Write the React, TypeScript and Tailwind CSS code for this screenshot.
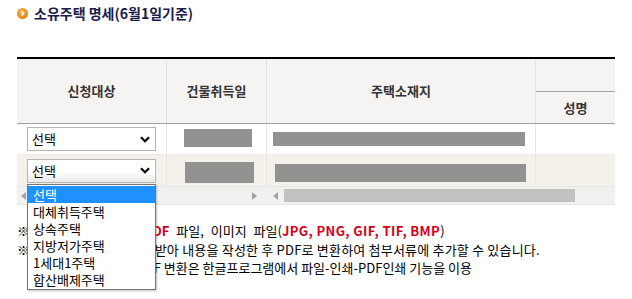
import React from "react";

function Chevron() {
  return (
    <svg width="10" height="7" viewBox="0 0 10 7" className="block">
      <polyline points="1,1.3 5,5.3 9,1.3" fill="none" stroke="#000" strokeWidth="2.2" />
    </svg>
  );
}

function FakeSelect({ open }: { open?: boolean }) {
  return (
    <div
      className={
        "flex h-[24px] w-[129px] items-center justify-between border border-[#b4b4b4] pl-[4px] pr-[5px] text-[13px] text-black " +
        (open ? "bg-gradient-to-b from-white via-white to-[#e9e9e9]" : "bg-white")
      }
    >
      <span className="leading-[22px]">선택</span>
      <Chevron />
    </div>
  );
}

function Arrow({ dir }: { dir: "l" | "r" }) {
  return (
    <svg width="5" height="8" viewBox="0 0 5 8" className="block">
      {dir === "l" ? <polygon points="5,0 0,4 5,8" fill="#a3a3a3" /> : <polygon points="0,0 5,4 0,8" fill="#a3a3a3" />}
    </svg>
  );
}

export default function App() {
  const options = ["선택", "대체취득주택", "상속주택", "지방저가주택", "1세대1주택", "합산배제주택"];
  return (
    <div className="relative h-[299px] w-[632px] overflow-hidden bg-white font-['Noto_Sans_CJK_KR','Noto_Sans',sans-serif] text-black">
      {/* title */}
      <div className="flex h-[26px] items-center pl-[17px]">
        <svg width="11" height="11" viewBox="0 0 11 11" className="block">
          <defs>
            <radialGradient id="og" cx="40%" cy="35%" r="70%">
              <stop offset="0%" stopColor="#fbb24c" />
              <stop offset="100%" stopColor="#e37c12" />
            </radialGradient>
          </defs>
          <circle cx="5.5" cy="5.5" r="5.5" fill="url(#og)" />
          <polyline points="4.3,3.2 6.6,5.5 4.3,7.8" fill="none" stroke="#fff" strokeWidth="1.7" />
        </svg>
        <span className="ml-[6px] text-[14px] font-bold leading-[26px] text-[#1b1b4d]">소유주택 명세(6월1일기준)</span>
      </div>

      {/* table */}
      <div className="ml-[17px] mt-[31px] w-[598px] overflow-hidden border-t-2 border-black">
        {/* header */}
        <div className="flex h-[65px] border-b border-[#a2a2a2] bg-[#f5f4f2] text-[13px] font-bold text-[#333]">
          <div className="flex w-[150px] items-center justify-center border-r border-[#e2e2e2]">신청대상</div>
          <div className="flex w-[100px] items-center justify-center border-r border-[#e2e2e2]">건물취득일</div>
          <div className="flex w-[269px] items-center justify-center border-r border-[#e2e2e2]">주택소재지</div>
          <div className="flex flex-1 flex-col">
            <div className="h-[33px] border-b border-[#a2a2a2]"></div>
            <div className="flex flex-1 items-center justify-center">성명</div>
          </div>
        </div>
        {/* row 1 */}
        <div className="flex h-[31px] border-b border-[#ebebeb] bg-white">
          <div className="flex w-[150px] items-center border-r border-[#e6e6e6] pl-[10px]">
            <FakeSelect />
          </div>
          <div className="flex w-[100px] items-center border-r border-[#e6e6e6] pl-[17px]">
            <div className="mt-[-2px] h-[18px] w-[68px] bg-[#929292]"></div>
          </div>
          <div className="flex w-[269px] items-center border-r border-[#e6e6e6] pl-[6px]">
            <div className="h-[14px] w-[252px] bg-[#929292]"></div>
          </div>
          <div className="flex-1"></div>
        </div>
        {/* row 2 */}
        <div className="flex h-[32px] border-b border-[#e6e6e6] bg-[#f4f0ea]">
          <div className="flex w-[150px] items-center border-r border-[#e6e6e6] pl-[10px]">
            <FakeSelect open />
          </div>
          <div className="flex w-[100px] items-end border-r border-[#e6e6e6] pb-[3px] pl-[18px]">
            <div className="h-[21px] w-[69px] bg-[#929292]"></div>
          </div>
          <div className="flex w-[269px] items-end border-r border-[#e6e6e6] pb-[4px] pl-[8px]">
            <div className="h-[18px] w-[251px] bg-[#929292]"></div>
          </div>
          <div className="flex-1"></div>
        </div>
        {/* scrollbars */}
        <div className="flex h-[18px] border-b border-[#e4e4e4] bg-[#f1f1f1]">
          <div className="flex w-[250px] items-center justify-between pl-[4px] pr-[10px]">
            <Arrow dir="l" />
            <Arrow dir="r" />
          </div>
          <div className="flex flex-1 items-center pl-[6px]">
            <Arrow dir="l" />
            <div className="ml-[6px] h-[13px] w-[291px] bg-[#c1c1c1]"></div>
          </div>
        </div>
      </div>

      {/* notes */}
      <div className="ml-[17px] mt-[17px] text-[13px] leading-[18.5px] text-black">
        <div>
          ※ 첨부 가능 파일형식 : <b className="text-[#d6001c]">PDF</b>
          <span className="[word-spacing:4px]"> 파일, 이미지 파일(</span>
          <b className="tracking-[0.4px] text-[#d6001c]">JPG, PNG, GIF, TIF, BMP</b>)
        </div>
        <div>
          <span className="[word-spacing:0.5px]">※ 관련 서식 파일을 다운 </span>
          <span className="tracking-[0.2px]">받아 내용을 작성한 후 PDF로 변환하여 첨부서류에 추가할 수 있습니다.</span>
        </div>
        <div className="pl-[16px]">한글(HWP) 문서의 PDF 변환은 한글프로그램에서 파일-인쇄-PDF인쇄 기능을 이용</div>
      </div>

      {/* open dropdown list */}
      <div className="absolute left-[27px] top-[184px] w-[129px] border border-[#767676] bg-white py-[1px] shadow-[1px_1px_2px_rgba(0,0,0,0.25)]">
        {options.map((o, i) => (
          <div
            key={o}
            className={
              "h-[17px] pl-[5px] text-[13px] leading-[17px] " + (i === 0 ? "bg-[#1e90ff] text-white" : "text-black")
            }
          >
            {o}
          </div>
        ))}
      </div>
    </div>
  );
}
